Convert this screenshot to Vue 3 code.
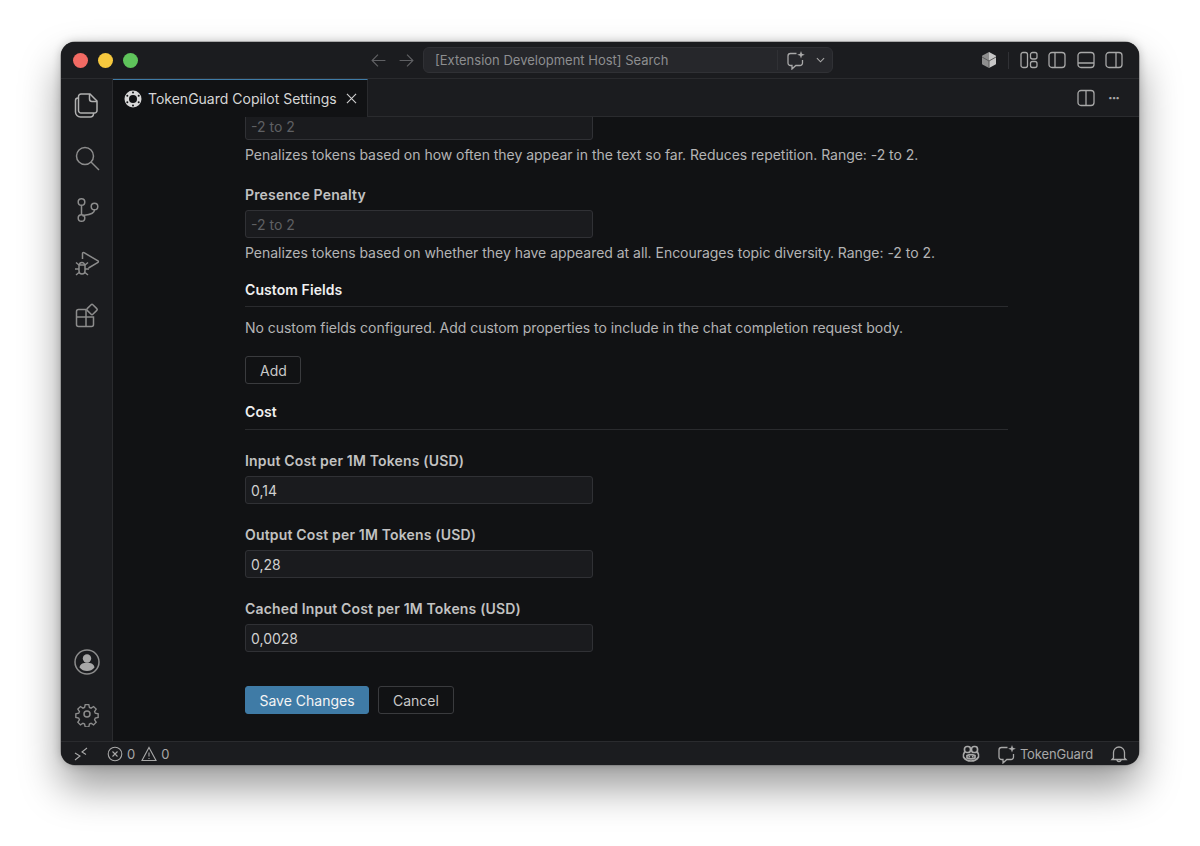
<script setup>
const costGroups = [
  { label: 'Input Cost per 1M Tokens (USD)', value: '0,14' },
  { label: 'Output Cost per 1M Tokens (USD)', value: '0,28' },
  { label: 'Cached Input Cost per 1M Tokens (USD)', value: '0,0028' },
]
const tabDots = [
  [9, 2.4], [14.7, 5.7], [14.7, 12.3], [9, 15.6], [3.3, 12.3], [3.3, 5.7],
]
</script>

<template>
  <div class="page">
    <div class="window">
      <header class="titlebar">
        <div class="lights">
          <span class="light red"></span><span class="light yellow"></span><span class="light green"></span>
        </div>
        <div class="nav">
          <svg class="navicon" viewBox="0 0 16 16"><path d="M14.5 8H2M7.5 2.5 2 8l5.5 5.500"/></svg>
          <svg class="navicon" viewBox="0 0 16 16"><path d="M1.500 8H14M8.500 2.500 14 8l-5.500 5.500"/></svg>
        </div>
        <div class="search">
          <span class="search-text">[Extension Development Host] Search</span>
          <span class="search-sep"></span>
          <svg class="ic20" viewBox="0 0 20 20"><path d="M10.500 3.500H4.500A2.500 2.500 0 0 0 2 6v7a2.500 2.500 0 0 0 2.500 2.500H6V19l3.800-3.500H14a2.500 2.500 0 0 0 2.500-2.500v-3"/><path class="fill" d="M15 1l1 2.800 2.800 1-2.800 1-1 2.800-1-2.800-2.800-1 2.800-1z"/></svg>
          <svg class="chev" viewBox="0 0 10 6"><path d="M1 1l4 4 4-4"/></svg>
        </div>
        <div class="title-right">
          <svg class="ic20 shield" viewBox="0 0 20 20"><path class="s-right" d="M10 2l6.600 3.600a1 1 0 0 1 .4.800v7.200a1 1 0 0 1-.4.800L10 18z"/><path class="s-left" d="M10 2 3.400 5.600a1 1 0 0 0-.4.800v7.200a1 1 0 0 0 .4.800L10 18z"/><path class="slash" d="M3 7l7 4 7-4M10 11v7"/></svg>
          <span class="tsep"></span>
          <svg class="ic20" viewBox="0 0 20 20"><rect x="2" y="2.500" width="6.500" height="15" rx="2"/><rect x="11.500" y="2.500" width="6.500" height="6.500" rx="2"/><rect x="11.500" y="11.500" width="6.500" height="6" rx="2"/></svg>
          <svg class="ic20" viewBox="0 0 20 20"><rect x="2" y="2.500" width="16" height="15" rx="3"/><path d="M8 2.500v15"/></svg>
          <svg class="ic20" viewBox="0 0 20 20"><rect x="2" y="2.500" width="16" height="15" rx="3"/><path d="M2 13h16"/></svg>
          <svg class="ic20" viewBox="0 0 20 20"><rect x="2" y="2.500" width="16" height="15" rx="3"/><path d="M12 2.500v15"/></svg>
        </div>
      </header>

      <div class="body">
        <nav class="activity">
          <div class="act-top">
            <svg class="ic26 bright" viewBox="0 0 26 26"><path d="M7 2h9l7 7v9.500a2.500 2.500 0 0 1-2.500 2.500H7a2.500 2.500 0 0 1-2.500-2.500v-14A2.500 2.500 0 0 1 7 2z"/><path d="M15.500 2v5a2.500 2.500 0 0 0 2.500 2.500h5"/><path d="M4.500 6H4a2.500 2.500 0 0 0-2.500 2.500V20A5 5 0 0 0 6.500 25h10a3 3 0 0 0 3-3v-1"/></svg>
            <svg class="ic26" viewBox="0 0 26 26"><circle cx="11" cy="11" r="8.500"/><path d="M17 17l8 8"/></svg>
            <svg class="ic26" viewBox="0 0 26 26"><circle cx="7.500" cy="5" r="3.300"/><circle cx="7.500" cy="21" r="3.300"/><circle cx="20.500" cy="9.500" r="3.300"/><path d="M7.500 8.300v9.400M20.500 12.800c0 4-5 5-10 5.500L8.500 19"/></svg>
            <svg class="ic26" viewBox="0 0 26 26"><path d="M8.500 9V3.500a1 1 0 0 1 1.500-.8L24 10.800a1 1 0 0 1 0 1.600L14.500 18"/><path d="M2 12.500l3 2.500M14 12.500l-3 2.500M1 19h4M15 19h-4M2 25l3-2.500M14 25l-3-2.500"/><path d="M5 15h6v6a3 3 0 0 1-6 0z"/><path d="M5.500 15a2.500 2.500 0 0 1 5 0"/></svg>
            <svg class="ic26" viewBox="0 0 26 26"><path d="M12 7.500H4.500A2 2 0 0 0 2.500 9.500v13a2 2 0 0 0 2 2h13a2 2 0 0 0 2-2V15H2.500M12 7.500V24.500"/><rect x="14" y="3.500" width="8" height="8" rx="1.200" transform="rotate(45 18 7.500)"/></svg>
          </div>
          <div class="act-bottom">
            <svg class="ic26" viewBox="0 0 26 26"><circle cx="13" cy="13" r="12"/><circle class="fill" cx="13" cy="9.500" r="4.200"/><path class="fill" d="M5.500 18.500c.5-3.500 3.500-4.800 7.500-4.800s7 1.300 7.500 4.800c-2 2.500-4.500 3.500-7.500 3.500s-5.500-1-7.500-3.500z"/></svg>
            <svg class="ic26" viewBox="0 0 26 26"><path d="M11 2.500h4l.7 3.200 1.800.8 2.800-1.800 2.900 2.900-1.800 2.800.8 1.800 3.200.7v4l-3.200.7-.8 1.800 1.800 2.800-2.900 2.900-2.800-1.800-1.800.8-.7 3.200h-4l-.7-3.200-1.800-.8-2.800 1.800-2.900-2.900 1.800-2.800-.8-1.800-3.200-.7v-4l3.200-.7.8-1.800-1.800-2.800 2.900-2.900 2.800 1.800 1.800-.8z" transform="translate(1.300 1.300) scale(.9)"/><circle cx="13" cy="13" r="3"/></svg>
          </div>
        </nav>

        <main class="main">
          <div class="tabs">
            <div class="tab">
              <svg class="tabicon" viewBox="0 0 18 18">
                <circle class="disc" cx="9" cy="9" r="8.500"/>
                <circle class="hole" cx="9" cy="9" r="4"/>
                <circle v-for="(d, i) in tabDots" :key="i" class="hole" :cx="d[0]" :cy="d[1]" r="1"/>
              </svg>
              <span class="tab-label">TokenGuard Copilot Settings</span>
              <svg class="tabclose" viewBox="0 0 12 12"><path d="M1 1l10 10M11 1 1 11"/></svg>
            </div>
            <div class="tab-fill">
              <svg class="ic20" viewBox="0 0 20 20"><rect x="2" y="2.500" width="16" height="15" rx="3"/><path d="M10 2.500v15"/></svg>
              <span class="dots">···</span>
            </div>
          </div>

          <div class="scroll">
            <div class="content">
              <input class="field" placeholder="-2 to 2" />
              <p class="hint">Penalizes tokens based on how often they appear in the text so far. Reduces repetition. Range: -2 to 2.</p>

              <label class="label presence">Presence Penalty</label>
              <input class="field" placeholder="-2 to 2" />
              <p class="hint">Penalizes tokens based on whether they have appeared at all. Encourages topic diversity. Range: -2 to 2.</p>

              <h3 class="section custom">Custom Fields</h3>
              <p class="hint nocustom">No custom fields configured. Add custom properties to include in the chat completion request body.</p>
              <button class="btn add">Add</button>

              <h3 class="section cost">Cost</h3>
              <div v-for="g in costGroups" :key="g.label" class="group">
                <label class="label">{{ g.label }}</label>
                <input class="field" :value="g.value" />
              </div>

              <div class="actions">
                <button class="btn primary">Save Changes</button>
                <button class="btn">Cancel</button>
              </div>
            </div>
          </div>
        </main>
      </div>

      <footer class="status">
        <div class="st-left">
          <svg class="remote" viewBox="0 0 14 14"><path d="M1 13l5-4-5-3M13 1 8 5l4 2.500"/></svg>
          <span class="st-item">
            <svg class="ic16" viewBox="0 0 16 16"><circle cx="8" cy="8" r="6.800"/><path d="M5.500 5.500l5 5M10.500 5.500l-5 5"/></svg>0
            <svg class="ic16 warn" viewBox="0 0 16 16"><path d="M8 1.500 15 14.500H1z"/><path d="M8 6.500v4M8 12v1"/></svg>0
          </span>
        </div>
        <div class="st-right">
          <svg class="ic20 copilot" viewBox="0 0 20 20"><rect x="3.500" y="2.500" width="6" height="6" rx="2.500"/><rect x="10.500" y="2.500" width="6" height="6" rx="2.500"/><path d="M3.800 7.500C2.500 9.500 2 11 2.500 13c1.500 2.500 4.500 4 7.500 4s6-1.500 7.500-4c.5-2 0-3.500-1.300-5.500"/><path d="M6 11.500c2.500-1 5.500-1 8 0v2.500c-2.500 1-5.500 1-8 0z"/><path d="M8.300 12v1.500M11.700 12v1.500"/></svg>
          <span class="tg">
            <svg class="ic20" viewBox="0 0 20 20"><path d="M10.500 3.500H4.500A2.500 2.500 0 0 0 2 6v7a2.500 2.500 0 0 0 2.500 2.500H6V19l3.800-3.500H14a2.500 2.500 0 0 0 2.500-2.500v-3"/><path class="fill" d="M15 1l1 2.800 2.800 1-2.800 1-1 2.800-1-2.800-2.800-1 2.800-1z"/></svg>
            TokenGuard
          </span>
          <svg class="ic20" viewBox="0 0 20 20"><path d="M4.500 14V8.500a5.500 5.500 0 0 1 11 0V14l1.500 1.500H3z"/><path d="M8 15.500a2 2 0 0 0 4 0"/></svg>
        </div>
      </footer>
    </div>
  </div>
</template>

<style>
html, body { margin: 0; background: #fff; }
</style>

<style scoped>
.page {
  width: 1200px;
  height: 846px;
  box-sizing: border-box;
  padding: 42px 61px 81px;
  background: #fff;
  font-family: Inter, "Liberation Sans", sans-serif;
  overflow: hidden;
}
.window {
  height: 100%;
  display: flex;
  flex-direction: column;
  border-radius: 14px;
  overflow: hidden;
  background: #111214;
  box-shadow: 0 0 0 .5px #777, 0 22px 40px rgba(0, 0, 0, .4), 0 0 10px rgba(0, 0, 0, .22);
}
svg { fill: none; stroke: #a8a8a8; stroke-width: 1.300; flex: none; display: block; }
svg .fill { fill: #a8a8a8; stroke: none; }
.ic20 { width: 20px; height: 20px; }
.ic16 { width: 16px; height: 16px; stroke-width: 1.100; }
.ic26 { width: 26px; height: 26px; stroke-width: 1.500; stroke: #8c8c8c; }
.ic26.bright { stroke: #b0b0b0; }

.titlebar {
  height: 37px;
  flex: none;
  box-sizing: border-box;
  display: flex;
  align-items: center;
  background: #1b1c1f;
  border-bottom: 1px solid #2a2b2e;
}
.lights { display: flex; gap: 10px; padding-left: 12px; }
.light { width: 15px; height: 15px; border-radius: 50%; }
.red { background: #f26a63; }
.yellow { background: #f6c83e; }
.green { background: #5fc45b; }
.nav { display: flex; gap: 11px; margin-left: 232px; }
.navicon { width: 17px; height: 17px; stroke: #5f6063; stroke-width: 1.100; }
.search {
  width: 410px;
  height: 26px;
  box-sizing: border-box;
  margin-left: 8px;
  padding: 0 6px 0 11px;
  display: flex;
  align-items: center;
  border-radius: 6px;
  background: #26272b;
  border: 1px solid #303135;
  color: #8d8e90;
  font-size: 13px;
}
.search-text { flex: 1; }
.search-sep { width: 1px; height: 20px; background: #303135; margin-right: 8px; }
.chev { width: 9px; height: 6px; margin-left: 10px; margin-right: 1px; stroke-width: 1.200; }
.title-right { margin-left: auto; padding-right: 15px; display: flex; align-items: center; gap: 8.5px; }
.tsep { width: 1px; height: 17px; background: #303135; margin: 0 1px; }
.shield { stroke: none; }
.s-left { fill: #8e8e8e; stroke: none; }
.s-right { fill: #c6c6c6; stroke: none; }
.slash { stroke: #5a5a5a; stroke-width: 1; fill: none; }

.body { flex: 1; min-height: 0; display: flex; }
.activity {
  width: 52px;
  flex: none;
  box-sizing: border-box;
  display: flex;
  flex-direction: column;
  justify-content: space-between;
  align-items: center;
  padding: 13px 0 14px;
  background: #1b1c1f;
  border-right: 1px solid #2a2b2e;
}
.act-top { display: flex; flex-direction: column; gap: 26.5px; }
.act-bottom { display: flex; flex-direction: column; gap: 26px; }

.main { flex: 1; min-width: 0; display: flex; flex-direction: column; }
.tabs { height: 38px; flex: none; display: flex; background: #1b1c1f; }
.tab {
  width: 255px;
  box-sizing: border-box;
  display: flex;
  align-items: center;
  padding: 0 10px 0 11px;
  background: #111214;
  border-top: 1px solid #3f7ba6;
  border-right: 1px solid #2a2b2e;
  color: #d6d6d6;
  font-size: 14px;
}
.tabicon { width: 18px; height: 18px; margin-right: 6px; }
.disc { fill: #d8d8d8; stroke: none; }
.hole { fill: #111214; stroke: none; }
.tab-label { white-space: nowrap; }
.tabclose { width: 11px; height: 11px; margin-left: auto; stroke: #d0d0d0; stroke-width: 1.200; }
.tab-fill {
  flex: 1;
  display: flex;
  align-items: center;
  justify-content: flex-end;
  gap: 12px;
  padding-right: 20px;
  border-bottom: 1px solid #2a2b2e;
}
.dots { color: #a8a8a8; font-size: 14px; font-weight: 700; letter-spacing: -1px; }

.scroll { flex: 1; min-height: 0; overflow: hidden; }
.content { width: 763px; margin: -5px 0 0 132px; }
.field {
  display: block;
  width: 348px;
  height: 28px;
  box-sizing: border-box;
  padding: 0 5px;
  border: 1px solid #303135;
  border-radius: 3px;
  background: #1a1b1e;
  color: #d0d0d0;
  font: 14px Inter, "Liberation Sans", sans-serif;
  outline: none;
}
.field::placeholder { color: #5f6063; opacity: 1; }
.hint { margin: 6px 0 0; height: 18px; line-height: 18px; font-size: 14px; color: #b4b4b4; white-space: nowrap; letter-spacing: -.03px; }
.label { display: block; height: 18px; line-height: 18px; margin-bottom: 6px; font-size: 14px; font-weight: 600; color: #c2c2c2; letter-spacing: .17px; }
.presence { margin-top: 22px; }
.section {
  margin: 0;
  height: 25px;
  line-height: 18px;
  font-size: 14px;
  font-weight: 600;
  color: #f0f0f0;
  letter-spacing: .08px;
  border-bottom: 1px solid #2a2b2e;
}
.custom { margin-top: 19px; }
.nocustom { margin-top: 12px; }
.add { margin-top: 19px; display: block; width: 56px; }
.cost { margin-top: 19px; margin-bottom: 22px; height: 26px; }
.group { margin-bottom: 22px; }
.group:last-of-type { margin-bottom: 0; }
.btn {
  height: 28px;
  box-sizing: border-box;
  padding: 0 14px;
  border: 1px solid #3a3b3e;
  border-radius: 3px;
  background: transparent;
  color: #c8c8c8;
  font: 14px Inter, "Liberation Sans", sans-serif;
}
.primary { width: 124px; background: #3f7ba6; border-color: #3f7ba6; color: #f4f4f4; padding: 0; }
.actions { margin-top: 34px; display: flex; gap: 9px; }

.status {
  height: 24px;
  flex: none;
  box-sizing: border-box;
  display: flex;
  align-items: center;
  justify-content: space-between;
  padding: 0 10px 0 13px;
  background: #1b1c1f;
  border-top: 1px solid #2a2b2e;
  color: #a8a8a8;
  font-size: 13px;
}
.st-left, .st-right, .st-item, .tg { display: flex; align-items: center; }
.remote { width: 14px; height: 14px; stroke-width: 1.100; }
.st-item { margin-left: 19px; gap: 4px; }
.warn { margin-left: 2px; }
.st-right { gap: 16px; }
.tg { gap: 3px; letter-spacing: -.15px; }
.copilot { stroke-width: 1.700; }
</style>
